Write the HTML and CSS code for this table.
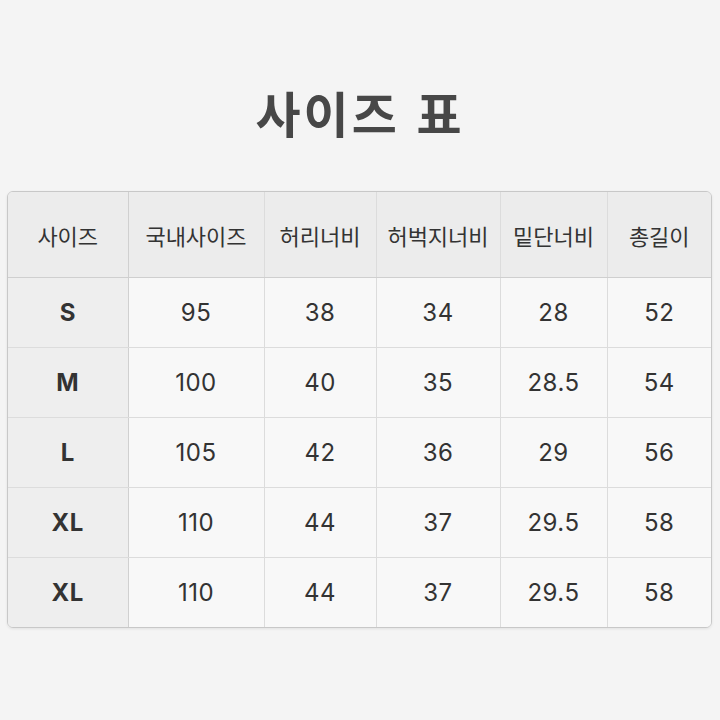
FILE: index.html
```html
<!DOCTYPE html>
<html lang="ko">
<head>
<meta charset="utf-8">
<link rel="stylesheet" href="styles.css">
</head>
<body>
<h1 class="title">사이즈 표</h1>
<div class="table-wrap">
<table class="size-table">
<colgroup>
<col class="c1"><col class="c2"><col class="c3"><col class="c4"><col class="c5"><col class="c6">
</colgroup>
<thead>
<tr><th>사이즈</th><th>국내사이즈</th><th>허리너비</th><th>허벅지너비</th><th>밑단너비</th><th>총길이</th></tr>
</thead>
<tbody>
<tr><th>S</th><td>95</td><td>38</td><td>34</td><td>28</td><td>52</td></tr>
<tr><th>M</th><td>100</td><td>40</td><td>35</td><td>28.5</td><td>54</td></tr>
<tr><th>L</th><td>105</td><td>42</td><td>36</td><td>29</td><td>56</td></tr>
<tr><th>XL</th><td>110</td><td>44</td><td>37</td><td>29.5</td><td>58</td></tr>
<tr><th>XL</th><td>110</td><td>44</td><td>37</td><td>29.5</td><td>58</td></tr>
</tbody>
</table>
</div>
</body>
</html>
```
FILE: styles.css
```css
html, body {
  margin: 0;
  padding: 0;
  background: #f4f4f4;
}
body {
  font-family: "Noto Sans CJK KR", "Noto Sans", sans-serif;
  color: #333;
  padding-bottom: 40px;
}
.title {
  margin: 0;
  padding-top: 80px;
  height: 191px;
  box-sizing: border-box;
  text-align: center;
  font-size: 49px;
  line-height: 64px;
  font-weight: 700;
  color: #474747;
  letter-spacing: 3px;
}
.table-wrap {
  margin: 0 8px 0 7px;
  border: 1px solid #c8c8c8;
  border-radius: 6px;
  overflow: hidden;
  box-shadow: 0 1px 3px rgba(0,0,0,0.08);
}
.size-table {
  width: 100%;
  border-collapse: collapse;
  table-layout: fixed;
}
.c1 { width: 120px; }
.c2 { width: 136px; }
.c3 { width: 112px; }
.c4 { width: 124px; }
.c5 { width: 107px; }
.c6 { width: auto; }
.size-table th, .size-table td {
  border-right: 1px solid #dcdcdc;
  border-bottom: 1px solid #dcdcdc;
  text-align: center;
  padding: 0;
}
.size-table tr > *:last-child { border-right: none; }
.size-table tbody tr:last-child > * { border-bottom: none; }
.size-table thead th {
  height: 85px;
  background: #ececec;
  font-weight: 400;
  font-size: 22px;
  color: #333;
  border-bottom: 1px solid #cfcfcf;
}
.size-table thead th:first-child {
  border-right: 1px solid #d0d0d0;
}
.size-table tbody th {
  background: #eeeeee;
  font-family: "Inter", "Noto Sans", sans-serif;
  font-weight: 700;
  font-size: 24px;
  color: #333;
  letter-spacing: 0.5px;
  border-right: 1px solid #d0d0d0;
}
.size-table tbody td {
  background: #f8f8f8;
  font-family: "Inter", "Noto Sans", sans-serif;
  font-size: 24px;
  color: #333;
  letter-spacing: 0.5px;
}
.size-table tbody tr > * { height: 69px; }
```
